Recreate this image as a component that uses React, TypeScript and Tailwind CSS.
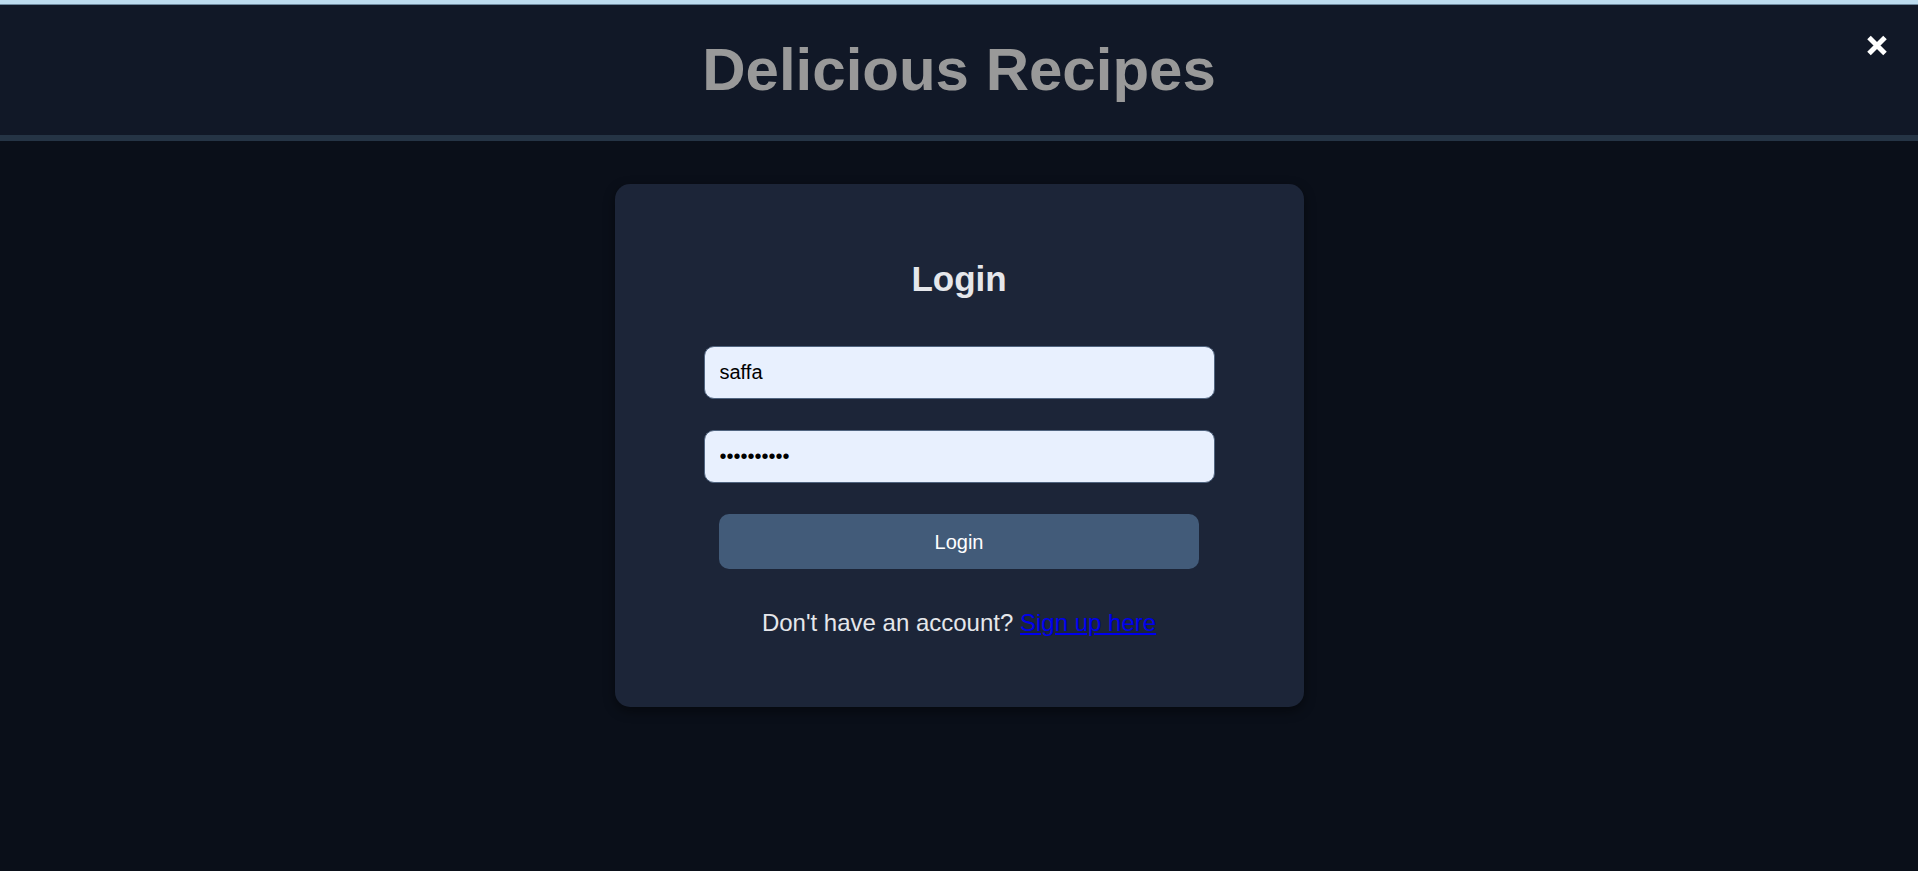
import React from "react";

const CloseIcon = () => (
  <svg width="22" height="21" viewBox="0 0 22 21" fill="none">
    <path d="M3 2.5L19 18.5M19 2.5L3 18.5" stroke="white" strokeWidth="5" />
  </svg>
);

const App = () => {
  return (
    <div className="min-h-screen w-full bg-[#0a0f19] font-['Liberation_Sans',Arial,sans-serif]">
      <div className="h-[4px] bg-[#bddcef]" />
      <div className="h-[1px] bg-[#6f8aa0]" />
      <header className="relative h-[136px] bg-[#111827] border-b-[6px] border-[#253445] flex items-center justify-center">
        <h1 className="text-[60px] font-bold text-[#999999]">Delicious Recipes</h1>
        <button className="absolute top-[30px] right-[30px]" aria-label="close">
          <CloseIcon />
        </button>
      </header>

      <main className="flex justify-center pt-[43px]">
        <div className="w-[689px] rounded-[15px] bg-[#1c2538] shadow-[0_4px_12px_rgba(0,0,0,0.45)] pt-[75px] pb-[66px] flex flex-col items-center">
          <h2 className="text-[35px] leading-[40px] font-bold text-[#e5e7eb]">Login</h2>

          <form className="mt-[47px] flex flex-col items-center">
            <input
              type="text"
              defaultValue="saffa"
              className="w-[511px] h-[53px] px-[15px] rounded-[10px] border border-[#50647f] bg-[#e8f0fe] text-[20px] text-black outline-none"
            />
            <input
              type="password"
              defaultValue="abcdefghij"
              className="mt-[31px] w-[511px] h-[53px] px-[15px] rounded-[10px] border border-[#50647f] bg-[#e8f0fe] text-[20px] text-black outline-none"
            />
            <button
              type="button"
              className="mt-[31px] w-[480px] h-[55px] rounded-[10px] bg-[#425b79] text-white text-[20px]"
            >
              Login
            </button>
          </form>

          <p className="mt-[36px] text-[24px] text-[#e5e7eb]">
            Don't have an account?{" "}
            <a href="#" className="text-[#0000ee] underline">
              Sign up here
            </a>
          </p>
        </div>
      </main>
    </div>
  );
};

export default App;
